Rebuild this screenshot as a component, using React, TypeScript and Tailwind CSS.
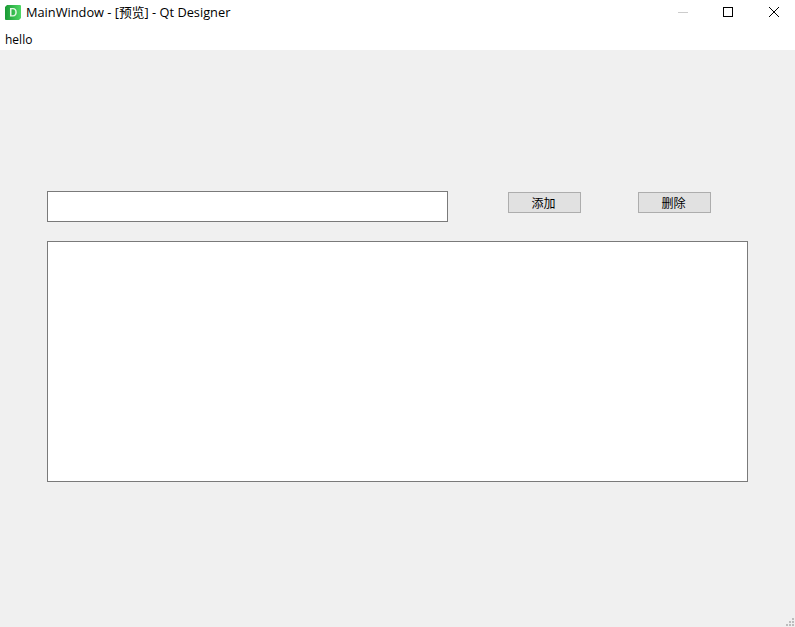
function DesignerIcon() {
  return (
    <svg width="16" height="15" viewBox="0 0 16 15" className="shrink-0">
      <defs>
        <linearGradient id="qd" x1="0" y1="0" x2="1" y2="0">
          <stop offset="0" stopColor="#1a9a35" />
          <stop offset="1" stopColor="#4fd865" />
        </linearGradient>
      </defs>
      <path d="M2 0h13a1 1 0 0 1 1 1v12l-2 2H1a1 1 0 0 1-1-1V2z" fill="url(#qd)" />
      <path d="M5 3h3c2.500 0 3.800 1.700 3.800 4.300S10.500 11.500 8 11.500H5zM6.500 4.300v5.900H8c1.500 0 2.300-1.100 2.300-2.900S9.500 4.300 8 4.300z" fill="#e4f7e4" fillRule="evenodd" />
    </svg>
  );
}

function WindowButtons() {
  return (
    <div className="flex items-start pt-[7px] pr-[16px]">
      <svg width="10" height="10" viewBox="0 0 10 10" className="mr-[35px]">
        <path d="M0 5.500h10" stroke="#cccccc" strokeWidth="1" />
      </svg>
      <svg width="10" height="10" viewBox="0 0 10 10" className="mr-[36px]">
        <rect x="0.500" y="0.500" width="9" height="9" fill="none" stroke="#000000" strokeWidth="1" />
      </svg>
      <svg width="10" height="10" viewBox="0 0 10 10">
        <path d="M0 0l10 10M10 0L0 10" stroke="#000000" strokeWidth="1" />
      </svg>
    </div>
  );
}

function SizeGrip() {
  const dots = [
    [6, 0],
    [3, 3],
    [6, 3],
    [0, 6],
    [3, 6],
    [6, 6],
  ];
  return (
    <svg width="8" height="8" viewBox="0 0 8 8" className="absolute right-px bottom-px">
      {dots.map(([x, y]) => (
        <rect key={`${x}-${y}`} x={x} y={y} width="2" height="2" fill="#bdbdbd" />
      ))}
    </svg>
  );
}

function PushButton({ label, className }: { label: string; className?: string }) {
  return (
    <button
      type="button"
      className={`w-[73px] h-[21px] mt-px pt-[2px] pr-[2px] bg-[#e1e1e1] border border-[#adadad] text-[12px] leading-none text-black ${className ?? ""}`}
    >
      {label}
    </button>
  );
}

export default function App() {
  return (
    <div className="relative h-[627px] w-[795px] overflow-hidden flex flex-col bg-[#f0f0f0] text-black font-['Open_Sans','Noto_Sans_CJK_SC',sans-serif]">
      <div className="h-[30px] bg-white flex items-start justify-between pl-[5px]">
        <div className="flex items-start gap-[5px] pt-[5px]">
          <DesignerIcon />
          <span className="text-[12.8px] leading-[15px]">MainWindow - [预览] - Qt Designer</span>
        </div>
        <WindowButtons />
      </div>
      <div className="h-[20px] bg-white flex items-center px-[5px] pb-px text-[12px]">hello</div>

      <div className="flex-1 pt-[141px] pl-[47px]">
        <div className="flex items-start">
          <input type="text" className="w-[401px] h-[31px] bg-white border border-[#7a7a7a] outline-none" />
          <PushButton label="添加" className="ml-[60px]" />
          <PushButton label="删除" className="ml-[57px]" />
        </div>
        <div className="w-[701px] h-[241px] mt-[19px] bg-white border border-[#7a7a7a]" />
      </div>

      <SizeGrip />
    </div>
  );
}
